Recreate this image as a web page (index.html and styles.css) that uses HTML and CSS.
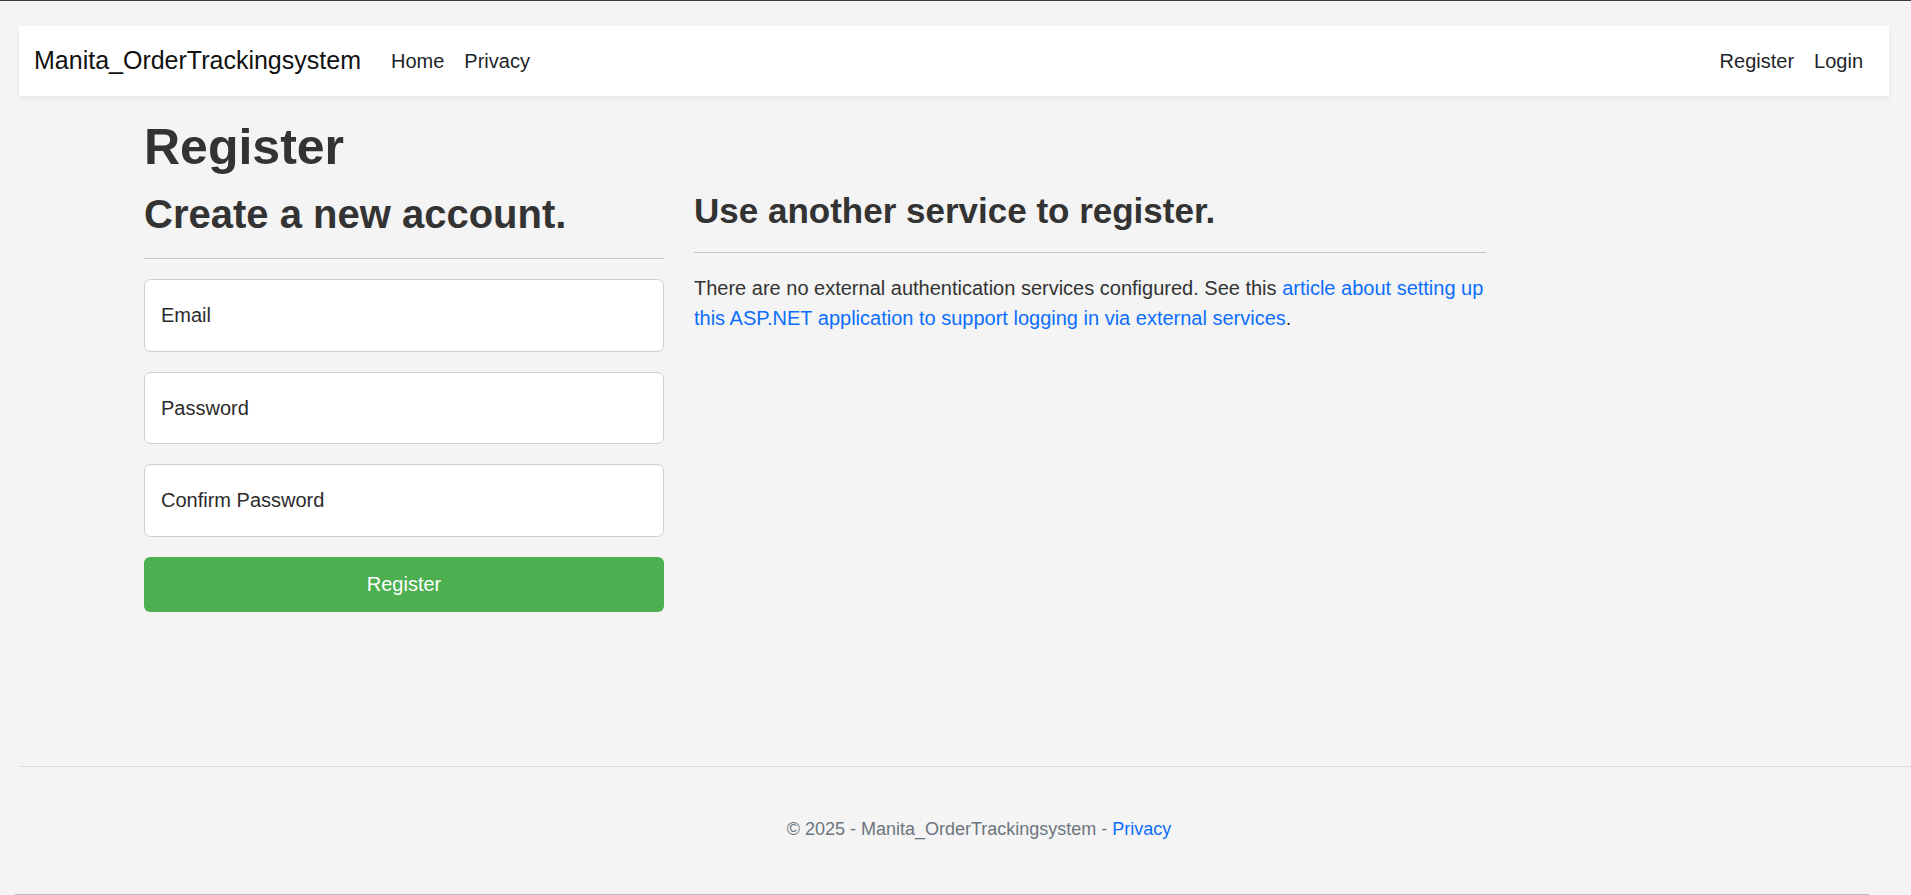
FILE: index.html
```html
<!DOCTYPE html>
<html lang="en">
<head>
<meta charset="utf-8">
<title>Register - Manita_OrderTrackingsystem</title>
<link rel="stylesheet" href="styles.css">
</head>
<body>
<div class="topline"></div>
<div class="page">
  <header>
    <nav class="navbar">
      <a class="brand" href="#">Manita_OrderTrackingsystem</a>
      <ul class="nav nav-left">
        <li><a href="#">Home</a></li>
        <li><a href="#">Privacy</a></li>
      </ul>
      <ul class="nav nav-right">
        <li><a href="#">Register</a></li>
        <li><a href="#">Login</a></li>
      </ul>
    </nav>
  </header>
  <main class="main">
    <div class="container">
      <h1 class="title">Register</h1>
      <div class="row">
        <section class="col-left">
          <h2 class="h2">Create a new account.</h2>
          <hr class="rule">
          <div class="field"><span class="field-label">Email</span></div>
          <div class="field"><span class="field-label">Password</span></div>
          <div class="field"><span class="field-label">Confirm Password</span></div>
          <button class="btn-register" type="button">Register</button>
        </section>
        <section class="col-right">
          <h3 class="h3">Use another service to register.</h3>
          <hr class="rule">
          <p class="info">There are no external authentication services configured. See this <a href="#">article about setting up<br>this ASP.NET application to support logging in via external services</a>.</p>
        </section>
      </div>
    </div>
  </main>
  <footer class="footer">
    <div class="footer-text">&copy; 2025 - Manita_OrderTrackingsystem - <a href="#">Privacy</a></div>
  </footer>
</div>
<div class="scrollbar-line"></div>
</body>
</html>
```
FILE: styles.css
```css
* { box-sizing: border-box; }

html, body {
  margin: 0;
  padding: 0;
}

body {
  background: #f4f4f4;
  font-family: "Liberation Sans", Arial, sans-serif;
  font-size: 20px;
  line-height: 1.5;
  color: #333333;
  height: 895px;
  display: flex;
  flex-direction: column;
  overflow: hidden;
}

a { text-decoration: none; color: #0d6efd; }

.topline {
  height: 1px;
  background: #3a3a3a;
  flex: none;
}

.page {
  flex: 1;
  display: flex;
  flex-direction: column;
  padding-left: 19px;
}

.navbar {
  margin: 25px 22px 0 0;
  height: 70px;
  background: #ffffff;
  box-shadow: 0 3px 6px rgba(0, 0, 0, 0.06);
  display: flex;
  align-items: center;
  padding: 0 16px 0 15px;
}

.brand {
  font-size: 25px;
  color: #111111;
  margin-right: 20px;
  line-height: 1.5;
}

.nav {
  list-style: none;
  margin: 0;
  padding: 0;
  display: flex;
}

.nav a {
  display: block;
  padding: 0 10px;
  color: #212529;
  font-size: 20px;
}

.nav-right { margin-left: auto; }

.main {
  flex: 1;
  padding-top: 21px;
}

.container {
  width: 1650px;
  margin-left: 110px;
  padding: 0 15px;
}

.title {
  font-size: 50px;
  font-weight: 700;
  line-height: 1.2;
  margin: 0 0 13px;
  color: #333333;
}

.row {
  display: flex;
  gap: 30px;
}

.col-left { width: 520px; }
.col-right { width: 792px; }

.h2 {
  font-size: 40px;
  font-weight: 700;
  line-height: 1.2;
  margin: 0 0 10px;
}

.h3 {
  font-size: 35px;
  font-weight: 700;
  line-height: 1.2;
  margin: 0 0 10px;
}

.rule {
  border: 0;
  border-top: 1px solid #c6c6c6;
  margin: 20px 0;
  height: 0;
}

.field {
  height: 72.5px;
  background: #ffffff;
  border: 1px solid #cfcfcf;
  border-radius: 7px;
  margin-bottom: 20px;
  display: flex;
  align-items: center;
  padding: 0 16px;
}

.field-label {
  font-size: 20px;
  color: #2b2b2b;
}

.btn-register {
  display: block;
  width: 100%;
  height: 55px;
  border: 0;
  border-radius: 6px;
  background: #4caf50;
  color: #ffffff;
  font-family: "Liberation Sans", Arial, sans-serif;
  font-size: 20px;
  padding: 0;
}

.info {
  margin: 0;
  line-height: 30px;
}

.footer {
  flex: none;
  height: 129px;
  border-top: 1px solid #dddddd;
  padding: 32px 0 0 28px;
  text-align: center;
  color: #6c757d;
  font-size: 18px;
  line-height: 60px;
}

.scrollbar-line {
  position: fixed;
  left: 15px;
  bottom: 0;
  width: 1854px;
  height: 1px;
  background: #bdbdbd;
}
```
